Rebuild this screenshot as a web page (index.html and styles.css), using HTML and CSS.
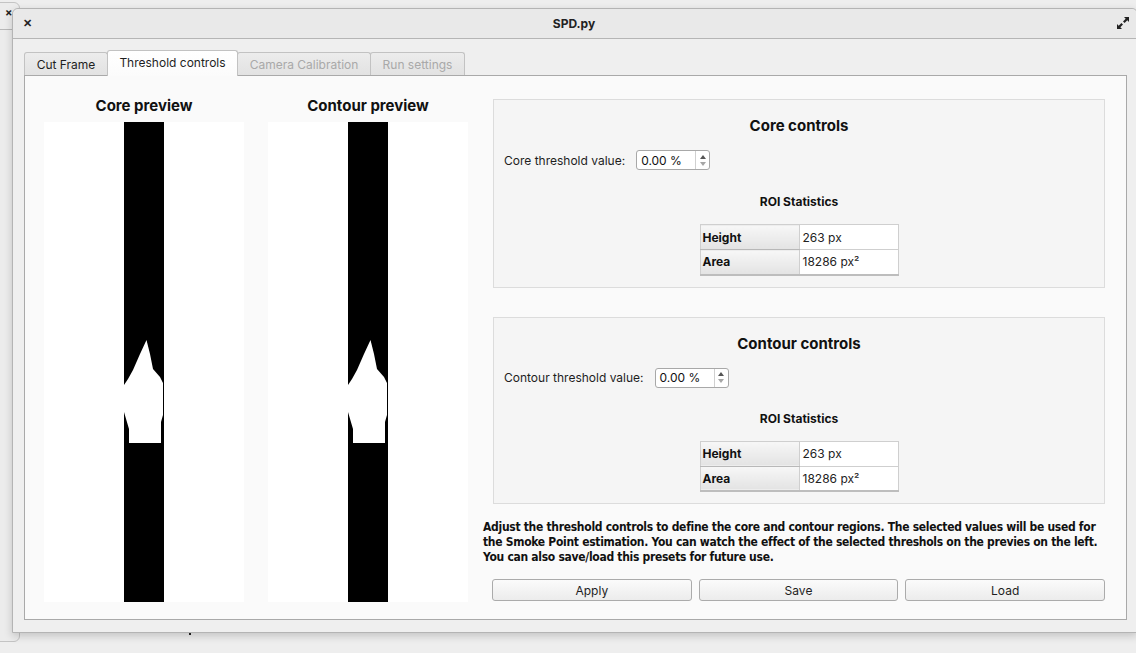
FILE: index.html
```html
<!DOCTYPE html>
<html>
<head>
<meta charset="utf-8">
<title>SPD.py</title>
<link rel="stylesheet" href="styles.css">
</head>
<body>
<div class="behind-window"><span class="behind-close">×</span></div>
<div class="behind-mark"></div>
<div class="window">
  <div class="titlebar">
    <span class="tb-close">✕</span>
    <span class="tb-title">SPD.py</span>
    <svg class="tb-max" width="12" height="12" viewBox="0 0 12 12">
      <path d="M7 0H12V5L10.3 3.3L7.6 6L6 4.4L8.7 1.7Z" fill="#222"/>
      <path d="M5 12H0V7L1.7 8.7L4.4 6L6 7.6L3.3 10.3Z" fill="#222"/>
    </svg>
  </div>
  <div class="client">
    <div class="tabbar">
      <div class="tab tab-cut">Cut Frame</div>
      <div class="tab selected">Threshold controls</div>
      <div class="tab disabled tab-cam">Camera Calibration</div>
      <div class="tab disabled tab-run">Run settings</div>
    </div>
    <div class="panel">
      <div class="preview">
        <div class="preview-title">Core preview</div>
        <svg class="preview-img" width="200" height="480" viewBox="0 0 200 480">
          <rect x="0" y="0" width="200" height="480" fill="#fff"/>
          <rect x="80" y="0" width="40" height="480" fill="#000"/>
          <path d="M102.5 218L106 232L109 247L116 255L119 261L119 293L117 300L117 321L85 321L85 307L80 290L80 263L84 257L89 248L96 232Z" fill="#fff"/>
        </svg>
      </div>
      <div class="preview">
        <div class="preview-title">Contour preview</div>
        <svg class="preview-img" width="200" height="480" viewBox="0 0 200 480">
          <rect x="0" y="0" width="200" height="480" fill="#fff"/>
          <rect x="80" y="0" width="40" height="480" fill="#000"/>
          <path d="M102.5 218L106 232L109 247L116 255L119 261L119 293L117 300L117 321L85 321L85 307L80 290L80 263L84 257L89 248L96 232Z" fill="#fff"/>
        </svg>
      </div>
      <div class="controls">
        <div class="group group-core">
          <div class="group-title">Core controls</div>
          <div class="field-row">
            <span class="field-label">Core threshold value:</span>
            <div class="spinbox">
              <span class="spin-value">0.00 %</span>
              <div class="spin-buttons">
                <span class="arrow-up"></span>
                <span class="arrow-down"></span>
              </div>
            </div>
          </div>
          <div class="stats-title">ROI Statistics</div>
          <table class="stats">
            <tr><th>Height</th><td>263 px</td></tr>
            <tr><th>Area</th><td>18286 px²</td></tr>
          </table>
        </div>
        <div class="group group-contour">
          <div class="group-title">Contour controls</div>
          <div class="field-row">
            <span class="field-label">Contour threshold value:</span>
            <div class="spinbox">
              <span class="spin-value">0.00 %</span>
              <div class="spin-buttons">
                <span class="arrow-up"></span>
                <span class="arrow-down"></span>
              </div>
            </div>
          </div>
          <div class="stats-title">ROI Statistics</div>
          <table class="stats">
            <tr><th>Height</th><td>263 px</td></tr>
            <tr><th>Area</th><td>18286 px²</td></tr>
          </table>
        </div>
        <p class="description">Adjust the threshold controls to define the core and contour regions. The selected values will be used for<br>the Smoke Point estimation. You can watch the effect of the selected threshols on the previes on the left.<br>You can also save/load this presets for future use.</p>
        <div class="buttons">
          <button class="btn">Apply</button>
          <button class="btn">Save</button>
          <button class="btn">Load</button>
        </div>
      </div>
    </div>
  </div>
</div>
</body>
</html>
```
FILE: styles.css
```css
* { box-sizing: border-box; }
html, body {
  margin: 0;
  padding: 0;
  width: 1136px;
  height: 653px;
  overflow: hidden;
}
body {
  background: #eeeeee;
  font-family: Inter, "Noto Sans", sans-serif;
  font-size: 12px;
  color: #1e1e1e;
  position: relative;
  padding: 8px 0 0 12px;
}
.behind-window {
  position: absolute;
  left: -300px;
  top: 2px;
  width: 320px;
  height: 640px;
  border: 1px solid #c4c4c4;
  border-radius: 6px;
  background: #ececec;
}
.behind-window::after {
  content: "";
  position: absolute;
  left: 0;
  right: 0;
  top: 26px;
  border-top: 1px solid #b8b8b8;
}
.behind-close {
  position: absolute;
  left: 304px;
  top: 2px;
  font-size: 11px;
  font-weight: bold;
  color: #222;
}
.behind-mark {
  position: absolute;
  left: 189px;
  top: 632px;
  width: 2px;
  height: 3px;
  background: #222;
}
.window {
  position: relative;
  width: 1126px;
  height: 625px;
  border: 1px solid #b4b4b4;
  border-radius: 6px 6px 0 0;
  background: #efefef;
  box-shadow: 0 3px 8px rgba(0,0,0,0.18);
  display: flex;
  flex-direction: column;
}
.titlebar {
  height: 30px;
  flex: none;
  border-bottom: 1px solid #b5b5b5;
  background: #e9e9e9;
  border-radius: 6px 6px 0 0;
  display: flex;
  align-items: center;
  justify-content: center;
  position: relative;
}
.tb-close {
  position: absolute;
  left: 10px;
  top: 7px;
  font-size: 11px;
  font-weight: 900;
  color: #222;
}
.tb-title {
  font-weight: bold;
  font-size: 12px;
  color: #222;
  margin-left: -2px;
}
.tb-max {
  position: absolute;
  right: 8px;
  top: 8px;
}
.client {
  flex: 1;
  display: flex;
  flex-direction: column;
  padding: 11px 10px 12px 11px;
}
.tabbar {
  display: flex;
  align-items: flex-end;
  height: 26px;
  flex: none;
  position: relative;
  z-index: 1;
}
.tab {
  height: 23px;
  margin-bottom: 1px;
  padding: 1px 0 0 0;
  border: 1px solid #c2c2c2;
  border-bottom: none;
  border-radius: 3px 3px 0 0;
  background: linear-gradient(#ececec, #e2e2e2);
  display: flex;
  align-items: center;
  justify-content: center;
  font-size: 12px;
  white-space: nowrap;
  color: #1e1e1e;
}
.tab-cut { width: 84px; }
.tab.selected {
  width: 131px;
  height: 26px;
  margin-bottom: 0;
  margin-left: -1px;
  background: linear-gradient(#ffffff, #fbfbfb);
  padding: 0 0 2px 0;
}
.tab.disabled { color: #a9a9a9; margin-left: -1px; }
.tab-cam { width: 134px; }
.tab-run { width: 95px; }
.panel {
  flex: 1;
  margin-top: -1px;
  border: 1px solid #a9a9a9;
  background: #fafafa;
  display: flex;
  padding: 0 19px 0 19px;
}
.preview {
  width: 200px;
  flex: none;
  margin-right: 24px;
  display: flex;
  flex-direction: column;
  align-items: center;
}
.preview:nth-child(2) { margin-right: 15px; }
.preview-title {
  margin-top: 21px;
  height: 18px;
  line-height: 18px;
  font-size: 15px;
  font-weight: bold;
  color: #111;
}
.preview-img {
  display: block;
  margin-top: 7px;
}
.controls {
  width: 622px;
  flex: none;
  display: flex;
  flex-direction: column;
}
.group {
  margin-left: 10px;
  border: 1px solid #dcdcdc;
  background: #f5f5f5;
  display: flex;
  flex-direction: column;
  align-items: center;
  padding: 17px 0 11px 0;
}
.group-core { margin-top: 23px; }
.group-contour { margin-top: 29px; }
.group-title {
  height: 18px;
  line-height: 18px;
  font-size: 15px;
  font-weight: bold;
  color: #111;
}
.field-row {
  align-self: stretch;
  margin-top: 15px;
  padding-left: 10px;
  display: flex;
  align-items: center;
  height: 20px;
}
.field-label {
  font-size: 12px;
  color: #1e1e1e;
  margin-right: 11px;
}
.spinbox {
  width: 74px;
  height: 20px;
  border: 1px solid #a8a8a8;
  border-radius: 3px;
  background: #fff;
  display: flex;
  align-items: center;
}
.spin-value {
  flex: 1;
  padding-left: 4px;
  font-size: 12px;
  color: #111;
}
.spin-buttons {
  width: 14px;
  height: 100%;
  border-left: 1px solid #d0d0d0;
  display: flex;
  flex-direction: column;
  align-items: center;
  justify-content: center;
  gap: 3px;
}
.arrow-up {
  width: 0;
  height: 0;
  border-left: 3.5px solid transparent;
  border-right: 3.5px solid transparent;
  border-bottom: 4px solid #555;
}
.arrow-down {
  width: 0;
  height: 0;
  border-left: 3.5px solid transparent;
  border-right: 3.5px solid transparent;
  border-top: 4px solid #a6a6a6;
}
.stats-title {
  margin-top: 24px;
  height: 15px;
  line-height: 15px;
  font-size: 12px;
  font-weight: bold;
  color: #111;
}
.group-contour .stats-title { margin-top: 23px; }
.stats {
  margin-top: 15px;
  border-collapse: collapse;
  width: 199px;
  border: 1px solid #c6c6c6;
  border-bottom: 2px solid #bdbdbd;
  background: #fff;
}
.stats th, .stats td {
  height: 25px;
  padding: 0 0 0 2px;
  text-align: left;
  font-size: 12px;
  border: 1px solid #cfcfcf;
  width: 100px;
}
.stats th {
  font-weight: bold;
  color: #111;
  background: linear-gradient(#f7f7f7, #e3e3e3);
  border-bottom: 1px solid #b8b8b8;
}
.stats td {
  padding-left: 3px;
  color: #222;
}
.description {
  margin: 16px 0 0 0;
  height: 45px;
  font-family: "DejaVu Sans Condensed", "DejaVu Sans", sans-serif;
  font-stretch: condensed;
  font-weight: bold;
  font-size: 12px;
  letter-spacing: -0.3px;
  line-height: 15px;
  white-space: nowrap;
  color: #111;
}
.buttons {
  display: flex;
  gap: 7px;
  margin-top: 14px;
  padding-left: 9px;
}
.btn {
  flex: 1;
  height: 22px;
  border: 1px solid #ababab;
  border-radius: 3px;
  background: linear-gradient(#fbfbfb, #ececec);
  font-family: Inter, "Noto Sans", sans-serif;
  font-size: 12px;
  color: #1e1e1e;
  padding: 0;
}
```
